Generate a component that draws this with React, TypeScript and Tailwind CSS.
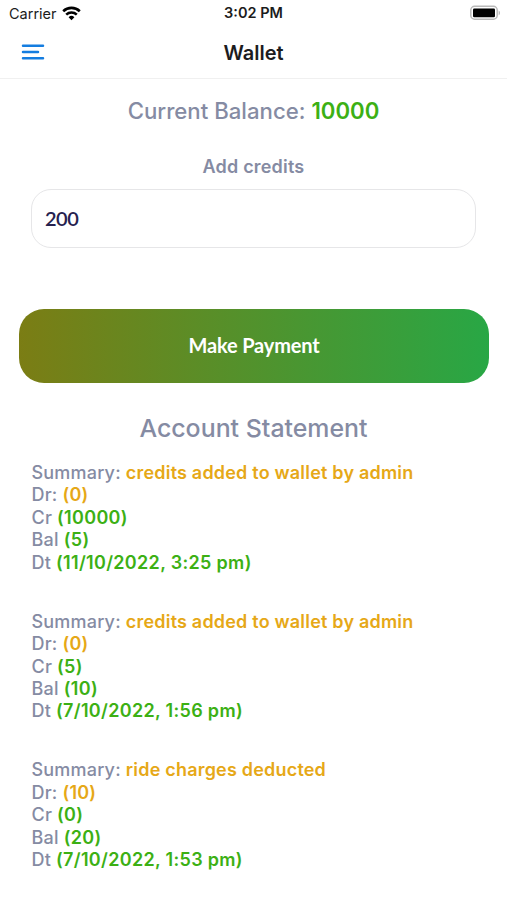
import { useState } from 'react'

interface Entry {
  id: number
  summary: string
  debit: number
  credit: number
  balance: number
  date: string
}

const entries: Entry[] = [
  { id: 1, summary: 'credits added to wallet by admin', debit: 0, credit: 10000, balance: 5, date: '11/10/2022, 3:25 pm' },
  { id: 2, summary: 'credits added to wallet by admin', debit: 0, credit: 5, balance: 10, date: '7/10/2022, 1:56 pm' },
  { id: 3, summary: 'ride charges deducted', debit: 10, credit: 0, balance: 20, date: '7/10/2022, 1:53 pm' },
]

function StatusBar() {
  return (
    <div className="grid h-[27px] grid-cols-3 items-center pl-[9px] pr-[6px] text-[14px] leading-none text-[#1c1c1c]">
      <div className="flex items-center gap-[5px]">
        <span className="pt-px text-[14.5px]">Carrier</span>
        <svg width="19" height="15" viewBox="0 0 19 15" fill="none" stroke="#000" strokeWidth="2.6">
          <path d="M1.2 5.2C5.8.8 13.2.8 17.8 5.2" />
          <path d="M4.2 8.6c3-2.8 7.6-2.8 10.6 0" />
          <path d="M6.6 11.200a4.200 4.200 0 0 1 5.800 0L9.500 14.200z" fill="#000" stroke="none" />
        </svg>
      </div>
      <span className="-ml-[3px] text-center text-[14.5px] font-semibold">3:02 PM</span>
      <svg className="-mt-px justify-self-end" width="31" height="16" viewBox="0 0 31 16">
        <rect x="0.800" y="1.300" width="26.400" height="12.900" rx="3.800" fill="#fff" stroke="#b9b9b9" strokeWidth="1.500" />
        <rect x="3" y="3.500" width="22" height="8.800" rx="1.200" fill="#000" />
        <path d="M28.600 5.400c1.900.8 1.900 4 0 4.800z" fill="#b9b9b9" />
      </svg>
    </div>
  )
}

function Header() {
  return (
    <header className="grid h-[52px] grid-cols-3 items-center border-b border-[#f0f0f0] px-[21px]">
      <button aria-label="Menu" className="w-[24px]">
        <svg className="-mt-[2px]" width="24" height="18" viewBox="0 0 24 18" stroke="#147de0" strokeWidth="2.500" strokeLinecap="round">
          <path d="M2 2.800h20M2 9h15M2 15.200h20" />
        </svg>
      </button>
      <h1 className="text-center text-[20px] font-semibold text-[#1c1c1e]">Wallet</h1>
    </header>
  )
}

function StatementEntry({ entry }: { entry: Entry }) {
  return (
    <li className="text-[18px] font-medium leading-[22.450px] tracking-[0.200px] whitespace-nowrap">
      <p>Summary: <span className="font-semibold text-[#e6a817]">{entry.summary}</span></p>
      <p>Dr: <span className="font-semibold text-[#e6a817]">({entry.debit})</span></p>
      <p>Cr <span className="font-semibold tracking-[0.320px] text-[#3cb014]">({entry.credit})</span></p>
      <p>Bal <span className="font-semibold tracking-[0.320px] text-[#3cb014]">({entry.balance})</span></p>
      <p>Dt <span className="font-semibold tracking-[0.320px] text-[#3cb014]">({entry.date})</span></p>
    </li>
  )
}

export default function App() {
  const [amount, setAmount] = useState('200')

  return (
    <div className="h-[900px] w-[507px] overflow-hidden bg-white font-['Inter',sans-serif] text-[#858ba3]">
      <StatusBar />
      <Header />

      <main>
        <p className="pt-[18px] text-center text-[22.200px] font-medium leading-[28px]">
          Current Balance: <span className="font-semibold text-[#3cb014]">10000</span>
        </p>

        <div className="px-[31px]">
          <label htmlFor="credits" className="mt-[30px] block text-center text-[18px] font-semibold leading-[24px] tracking-[0.200px]">
            Add credits
          </label>
          <input
            id="credits"
            value={amount}
            onChange={(e) => setAmount(e.target.value)}
            className="mt-[10px] block h-[59px] w-[445px] rounded-[20px] border border-[#e6e6e8] px-[13px] pb-[2px] font-['Lato',sans-serif] text-[20px] font-semibold tracking-[-0.500px] text-[#26224f] outline-none"
          />
        </div>

        <button className="mx-[19px] mt-[61px] flex h-[74px] w-[470px] items-center justify-center rounded-[25px] bg-linear-to-r/srgb from-[#7b7d14] to-[#28a745] pb-[2px] font-['Lato',sans-serif] text-[20px] font-bold tracking-[-0.150px] text-white">
          Make Payment
        </button>

        <h2 className="mt-[29px] text-center text-[24.900px] font-medium leading-[32px]">Account Statement</h2>
        <ul className="mt-[18px] space-y-[36.400px] pl-[31.500px]">
          {entries.map((entry) => (
            <StatementEntry key={entry.id} entry={entry} />
          ))}
        </ul>
      </main>
    </div>
  )
}
